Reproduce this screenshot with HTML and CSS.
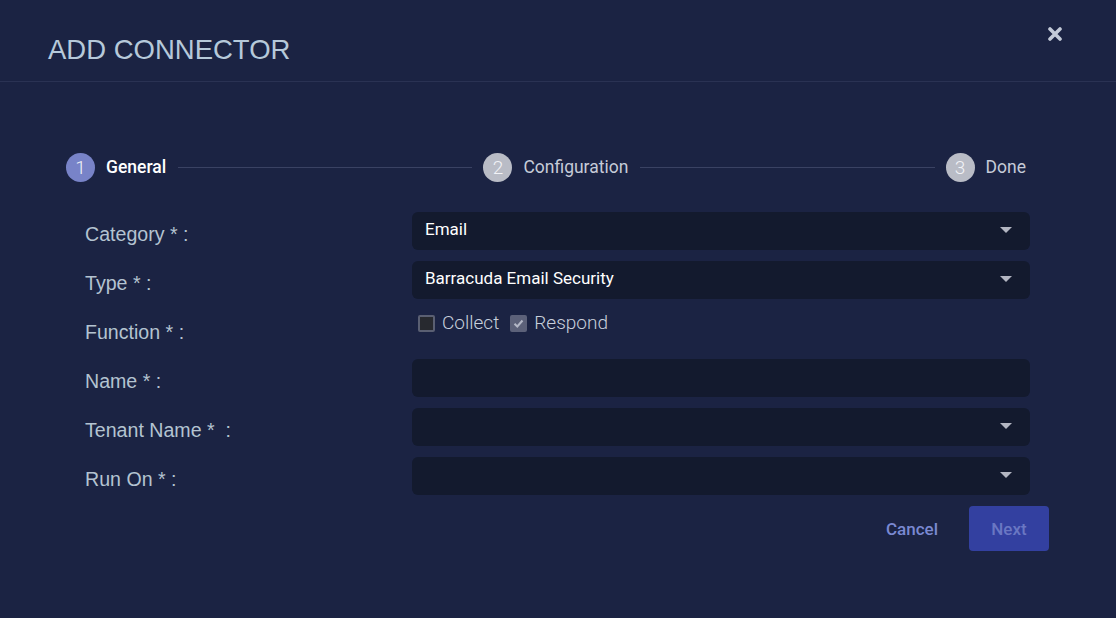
FILE: index.html
```html
<!DOCTYPE html>
<html>
<head>
<meta charset="utf-8">
<link rel="stylesheet" href="styles.css">
</head>
<body>
<div class="dialog">
  <header class="header">
    <h1 class="title">ADD CONNECTOR</h1>
    <button class="close" aria-label="close">
      <svg width="14" height="14" viewBox="0 0 14 14"><path d="M2 2 L12 12 M12 2 L2 12" stroke="#c3cad8" stroke-width="3.6" stroke-linecap="round"/></svg>
    </button>
  </header>
  <div class="body">
    <div class="stepper">
      <div class="step active"><span class="num">1</span><span class="step-label">General</span></div>
      <div class="line"></div>
      <div class="step"><span class="num">2</span><span class="step-label">Configuration</span></div>
      <div class="line"></div>
      <div class="step"><span class="num">3</span><span class="step-label">Done</span></div>
    </div>
    <div class="form">
      <div class="label">Category * :</div>
      <div class="select"><span>Email</span><i class="caret"></i></div>
      <div class="label">Type * :</div>
      <div class="select"><span>Barracuda Email Security</span><i class="caret"></i></div>
      <div class="label">Function * :</div>
      <div class="checks">
        <label class="check"><span class="box"></span>Collect</label>
        <label class="check"><span class="box checked"><svg width="13" height="13" viewBox="0 0 13 13"><path d="M2.5 6.8 L5.3 9.5 L10.5 3.5" fill="none" stroke="#b3b7c6" stroke-width="2"/></svg></span>Respond</label>
      </div>
      <div class="label">Name * :</div>
      <div class="select"></div>
      <div class="label">Tenant Name * &nbsp;:</div>
      <div class="select"><span></span><i class="caret"></i></div>
      <div class="label">Run On * :</div>
      <div class="select"><span></span><i class="caret"></i></div>
    </div>
    <div class="actions">
      <button class="btn-cancel">Cancel</button>
      <button class="btn-next">Next</button>
    </div>
  </div>
</div>
</body>
</html>
```

FILE: styles.css
```css
html, body {
  margin: 0;
  padding: 0;
  background: #1b2343;
  width: 1116px;
  height: 618px;
  overflow: hidden;
}
.dialog {
  width: 1116px;
  height: 618px;
  background: #1b2343;
  font-family: Roboto, "Liberation Sans", sans-serif;
}
.header {
  height: 82px;
  border-bottom: 1px solid #2a3253;
  display: flex;
  justify-content: space-between;
  align-items: flex-start;
  padding: 0 54px 0 48px;
  box-sizing: border-box;
}
.title {
  margin: 35px 0 0;
  font-family: "Liberation Sans", Arial, sans-serif;
  font-weight: 400;
  font-size: 27.5px;
  line-height: 30px;
  color: #b6c9da;
  letter-spacing: 0;
}
.close {
  margin-top: 27px;
  background: none;
  border: none;
  padding: 0;
  width: 14px;
  height: 14px;
  display: flex;
}
.body {
  padding: 70px 0 0 0;
}
.stepper {
  display: flex;
  align-items: center;
  margin: 0 90px 0 66px;
  height: 30px;
}
.step {
  display: flex;
  align-items: center;
  gap: 11px;
}
.num {
  width: 29px;
  height: 29px;
  border-radius: 50%;
  background: #b9bcc6;
  color: #f2f3f7;
  font-weight: 300;
  font-size: 19px;
  display: flex;
  align-items: center;
  justify-content: center;
}
.step.active .num {
  background: #7883c8;
}
.step-label {
  font-size: 17.5px;
  color: #c6cbd8;
}
.step.active .step-label {
  color: #ffffff;
  font-weight: 500;
}
.line {
  flex: 1;
  height: 1px;
  background: #3a4263;
  margin: 0 11px 0 12px;
}
.form {
  display: grid;
  grid-template-columns: 327px 618px;
  row-gap: 11px;
  margin: 30px 0 0 85px;
}
.label {
  font-family: "Liberation Sans", Arial, sans-serif;
  font-size: 19.6px;
  color: #b4c3d1;
  height: 38px;
  display: flex;
  align-items: center;
  padding-top: 6px;
  box-sizing: border-box;
}
.select {
  height: 38px;
  background: #131a2e;
  border-radius: 6px;
  display: flex;
  align-items: center;
  justify-content: space-between;
  padding: 0 18px 0 13px;
  box-sizing: border-box;
  color: #ffffff;
  font-size: 17px;
}
.select span {
  margin-top: -4px;
}
.caret {
  width: 0;
  height: 0;
  border-left: 6px solid transparent;
  border-right: 6px solid transparent;
  border-top: 6px solid #b3b6c2;
  margin-top: -2px;
}
.checks {
  height: 38px;
  display: flex;
  align-items: flex-start;
  gap: 11px;
  padding: 2px 0 0 6px;
  box-sizing: border-box;
}
.check {
  display: flex;
  align-items: center;
  gap: 7px;
  font-size: 19px;
  font-weight: 300;
  color: #c8cfdc;
  line-height: 22px;
}
.box {
  width: 17px;
  height: 17px;
  box-sizing: border-box;
  border: 2px solid #5a5f72;
  background: #27292f;
  border-radius: 2px;
  display: flex;
  align-items: center;
  justify-content: center;
}
.box.checked {
  background: #5c6179;
  border-color: #5c6179;
}
.actions {
  display: flex;
  justify-content: flex-end;
  align-items: center;
  gap: 30px;
  margin: 11px 67px 0 0;
}
.btn-cancel {
  background: none;
  border: none;
  font-family: Roboto, sans-serif;
  font-size: 17px;
  font-weight: 500;
  color: #7a89d2;
  padding: 0;
  margin-right: 1px;
}
.btn-next {
  width: 80px;
  height: 45px;
  border: none;
  border-radius: 4px;
  background: #3340a0;
  color: #6a77c3;
  font-family: Roboto, sans-serif;
  font-size: 17px;
  font-weight: 500;
}
```
